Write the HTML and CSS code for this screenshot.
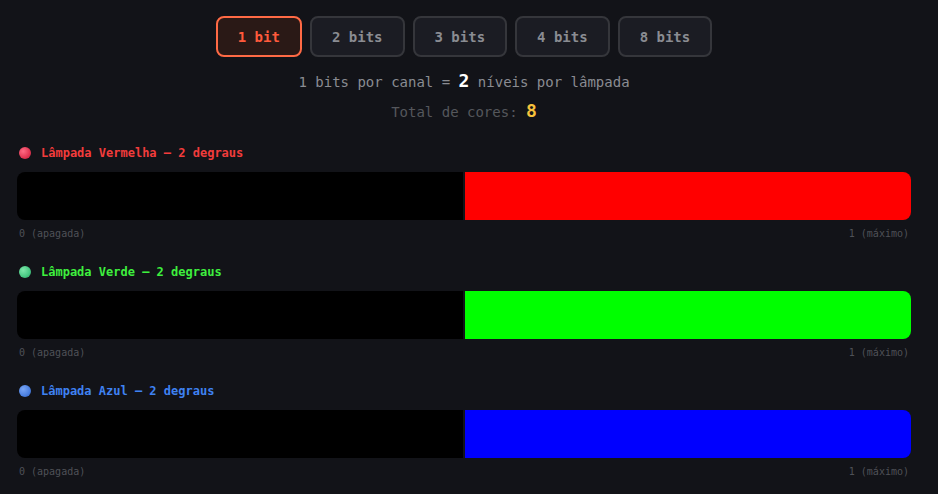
FILE: index.html
```html
<!DOCTYPE html>
<html lang="pt">
<head>
    <meta charset="UTF-8">
    <meta name="viewport" content="width=device-width, initial-scale=1.0">
    <title>Bits por canal</title>
    <link rel="stylesheet" href="styles.css">
</head>
<body>
    <div class="app">
        <div class="bit-buttons">
            <button class="bit-btn active">1 bit</button>
            <button class="bit-btn">2 bits</button>
            <button class="bit-btn">3 bits</button>
            <button class="bit-btn">4 bits</button>
            <button class="bit-btn">8 bits</button>
        </div>
        <p class="info">1 bits por canal = <strong class="levels">2</strong> níveis por lâmpada</p>
        <p class="total">Total de cores: <strong class="total-num">8</strong></p>

        <div class="channel red">
            <div class="channel-label"><span class="dot"></span>Lâmpada Vermelha — 2 degraus</div>
            <div class="bar">
                <div class="step off"></div>
                <div class="step on"></div>
            </div>
            <div class="captions"><span>0 (apagada)</span><span>1 (máximo)</span></div>
        </div>

        <div class="channel green">
            <div class="channel-label"><span class="dot"></span>Lâmpada Verde — 2 degraus</div>
            <div class="bar">
                <div class="step off"></div>
                <div class="step on"></div>
            </div>
            <div class="captions"><span>0 (apagada)</span><span>1 (máximo)</span></div>
        </div>

        <div class="channel blue">
            <div class="channel-label"><span class="dot"></span>Lâmpada Azul — 2 degraus</div>
            <div class="bar">
                <div class="step off"></div>
                <div class="step on"></div>
            </div>
            <div class="captions"><span>0 (apagada)</span><span>1 (máximo)</span></div>
        </div>
    </div>
</body>
</html>
```

FILE: styles.css
```css
body {
    margin: 0;
    background-color: #121318;
    font-family: "DejaVu Sans Mono", "Liberation Mono", monospace;
    color: #888;
}

.app {
    padding: 16px 27px 0 17px;
}

.bit-buttons {
    display: flex;
    justify-content: center;
    gap: 8px;
}

.bit-btn {
    height: 41px;
    padding: 0 20px;
    font-family: inherit;
    font-size: 14px;
    font-weight: bold;
    color: #8a8c92;
    background-color: #1b1c23;
    border: 2px solid #35363b;
    border-radius: 8px;
}

.bit-btn.active {
    color: #ff5a3c;
    background-color: #2a1916;
    border-color: #ff6a45;
}

.info {
    margin: 14px 0 0;
    height: 20px;
    line-height: 20px;
    text-align: center;
    font-size: 14px;
    color: #8a8c92;
}

.levels {
    font-size: 18px;
    color: #fff;
}

.total {
    margin: 10px 0 0;
    height: 20px;
    line-height: 20px;
    text-align: center;
    font-size: 14px;
    color: #55575c;
}

.total-num {
    font-size: 18px;
    color: #f7c23c;
}

.channel {
    margin-top: 24px;
}

.channel + .channel {
    margin-top: 24px;
}

.channel-label {
    display: flex;
    align-items: center;
    height: 16px;
    font-size: 12px;
    font-weight: bold;
}

.dot {
    width: 12px;
    height: 12px;
    border-radius: 50%;
    margin: 0 10px 0 2px;
}

.red .channel-label { color: #f23c3c; }
.green .channel-label { color: #3ef03e; }
.blue .channel-label { color: #3f82f2; }

.red .dot { background: radial-gradient(circle at 35% 35%, #ff6b84, #e23552 60%, #b8233c); }
.green .dot { background: radial-gradient(circle at 35% 35%, #7ee8aa, #46c882 60%, #2e9c60); }
.blue .dot { background: radial-gradient(circle at 35% 35%, #7aa6f5, #4a7fe0 60%, #2f5cb8); }

.bar {
    display: flex;
    gap: 2px;
    height: 48px;
    margin-top: 11px;
    border-radius: 8px;
    overflow: hidden;
}

.step {
    flex: 1;
}

.step.off { background-color: #000; }
.red .step.on { background-color: #ff0000; }
.green .step.on { background-color: #00ff00; }
.blue .step.on { background-color: #0000ff; }

.captions {
    display: flex;
    justify-content: space-between;
    margin-top: 8px;
    padding: 0 2px;
    line-height: 12px;
    font-size: 10px;
    color: #4f5157;
}
```
